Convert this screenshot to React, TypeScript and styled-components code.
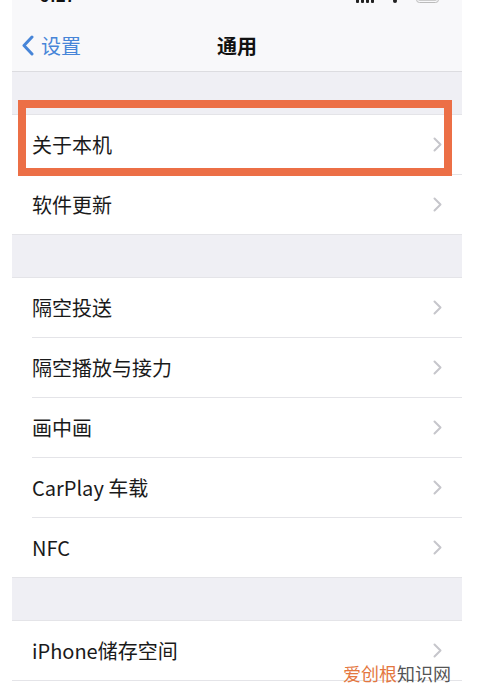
import { createGlobalStyle } from 'styled-components'
import styled from 'styled-components'

const GlobalStyle = createGlobalStyle`
  html, body {
    margin: 0;
    padding: 0;
    background: #ffffff;
  }
  body {
    font-family: "Noto Sans CJK SC", "Noto Sans", "Liberation Sans", sans-serif;
    color: #111111;
  }
`

const Page = styled.div`
  position: relative;
  width: 477px;
  height: 692px;
  overflow: hidden;
  background: #ffffff;
`

const Screen = styled.div`
  margin-left: 12px;
  width: 450px;
  display: flex;
  flex-direction: column;
  background: #efeff4;
`

const NavBar = styled.div`
  display: flex;
  flex-direction: column;
  background: #f8f8fa;
  border-bottom: 1px solid #dcdce0;
`

const StatusBar = styled.div`
  height: 20px;
  display: flex;
  align-items: flex-start;
  justify-content: space-between;
  padding: 0 20px 0 28px;
`

const Clock = styled.span`
  margin-top: -13px;
  font-family: "Liberation Sans", sans-serif;
  font-size: 17px;
  font-weight: 700;
  line-height: 20px;
  letter-spacing: 0.5px;
`

const StatusIcons = styled.div`
  display: flex;
  align-items: flex-end;
  gap: 14px;
  margin-top: -10px;
`

const NavRow = styled.div`
  position: relative;
  height: 51px;
  display: flex;
  align-items: center;
  justify-content: center;
`

const Back = styled.div`
  position: absolute;
  left: 10px;
  top: 0;
  bottom: 0;
  display: flex;
  align-items: center;
  gap: 7px;
  color: #4785d8;
  font-size: 20px;
`

const Title = styled.div`
  font-size: 20px;
  font-weight: 700;
  color: #111111;
`

const Gap = styled.div`
  height: 42px;
`

const Group = styled.div`
  background: #ffffff;
  border-top: 1px solid #e4e4e8;
  border-bottom: 1px solid #e4e4e8;
`

const Row = styled.div`
  height: 59px;
  margin-left: 20px;
  padding-right: 20px;
  display: flex;
  align-items: center;
  justify-content: space-between;
  font-size: 20px;
  color: #1a1a1a;
  & + & {
    border-top: 1px solid #e4e4e8;
  }
`

const Highlight = styled.div`
  position: absolute;
  left: 18px;
  top: 100px;
  width: 434px;
  height: 76px;
  box-sizing: border-box;
  border: 8px solid #ec6f46;
`

const Watermark = styled.div`
  position: absolute;
  left: 343px;
  top: 662px;
  font-size: 18px;
  line-height: 22px;
  color: #555555;
`

const Brand = styled.span`
  color: #e4773f;
`

function Chevron() {
  return (
    <svg width="9" height="15" viewBox="0 0 9 15">
      <polyline points="1.5,1.5 7.5,7.5 1.5,13.5" fill="none" stroke="#c6c6cb" strokeWidth="2" strokeLinecap="round" strokeLinejoin="round" />
    </svg>
  )
}

function BackArrow() {
  return (
    <svg width="12" height="21" viewBox="0 0 12 21">
      <polyline points="10,2 2,10.5 10,19" fill="none" stroke="#4785d8" strokeWidth="3" strokeLinecap="round" strokeLinejoin="round" />
    </svg>
  )
}

function SignalIcons() {
  return (
    <StatusIcons>
      <svg width="18" height="12" viewBox="0 0 18 12">
        <rect x="0" y="8" width="3" height="4" rx="1" fill="#222" />
        <rect x="5" y="6" width="3" height="6" rx="1" fill="#222" />
        <rect x="10" y="3" width="3" height="9" rx="1" fill="#222" />
        <rect x="15" y="0" width="3" height="12" rx="1" fill="#222" />
      </svg>
      <svg width="14" height="12" viewBox="0 0 14 12">
        <circle cx="7" cy="10" r="2" fill="#222" />
      </svg>
      <svg width="26" height="13" viewBox="0 0 26 13">
        <rect x="0.5" y="0.5" width="22" height="12" rx="3" fill="none" stroke="#bbb" />
        <rect x="2" y="2" width="19" height="9" rx="2" fill="#ccc" />
      </svg>
    </StatusIcons>
  )
}

const firstGroup = ['关于本机', '软件更新']
const secondGroup = ['隔空投送', '隔空播放与接力', '画中画', 'CarPlay 车载', 'NFC']
const thirdGroup = ['iPhone储存空间']

function SettingsGroup({ items }: { items: string[] }) {
  return (
    <Group>
      {items.map(label => (
        <Row key={label}>
          <span>{label}</span>
          <Chevron />
        </Row>
      ))}
    </Group>
  )
}

export default function App() {
  return (
    <Page>
      <GlobalStyle />
      <Screen>
        <NavBar>
          <StatusBar>
            <Clock>9:27</Clock>
            <SignalIcons />
          </StatusBar>
          <NavRow>
            <Back>
              <BackArrow />
              <span>设置</span>
            </Back>
            <Title>通用</Title>
          </NavRow>
        </NavBar>
        <Gap />
        <SettingsGroup items={firstGroup} />
        <Gap />
        <SettingsGroup items={secondGroup} />
        <Gap />
        <SettingsGroup items={thirdGroup} />
      </Screen>
      <Highlight />
      <Watermark>
        <Brand>爱创根</Brand>知识网
      </Watermark>
    </Page>
  )
}
